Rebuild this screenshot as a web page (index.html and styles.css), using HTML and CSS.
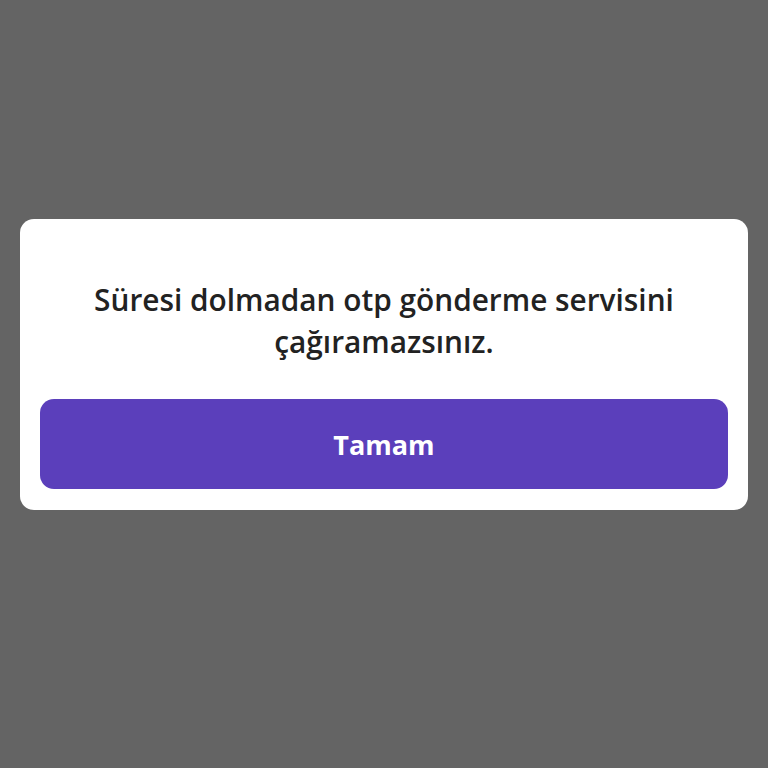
FILE: index.html
```html
<!DOCTYPE html>
<html lang="tr">
<head>
  <meta charset="UTF-8">
  <title>Uyarı</title>
  <link rel="stylesheet" href="styles.css">
</head>
<body>

  <div class="overlay">
    <div class="dialog">
      <p class="message">Süresi dolmadan otp gönderme servisini çağıramazsınız.</p>
      <button class="ok-btn" type="button">Tamam</button>
    </div>
  </div>

</body>
</html>
```

FILE: styles.css
```css
body { margin: 0; background: #646464; font-family: "Open Sans", "Noto Sans", sans-serif; }
.overlay { min-height: 768px; padding: 219px 20px 0; box-sizing: border-box; }
.dialog { background: #fff; border-radius: 14px; padding: 20px 20px 21px; }
.message { margin: 0; padding: 40px 30px 36px; text-align: center; font-size: 29.8px; font-weight: 600; line-height: 42px; color: #222; }
.ok-btn { display: block; width: 100%; height: 90px; background: #5b3fbb; color: #fff; border: none; border-radius: 14px; font-family: inherit; font-size: 27px; font-weight: 700; cursor: pointer; }
```
